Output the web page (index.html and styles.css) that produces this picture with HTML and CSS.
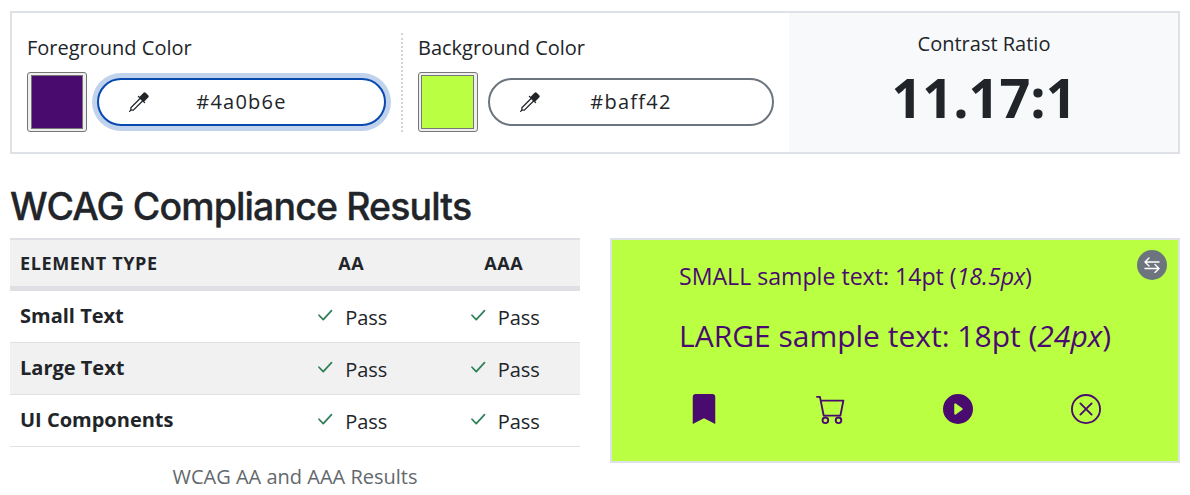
FILE: index.html
```html
<!DOCTYPE html>
<html lang="en">
<head>
<meta charset="utf-8">
<title>Contrast Checker</title>
<link rel="stylesheet" href="styles.css">
</head>
<body>
<svg class="defs" width="0" height="0" aria-hidden="true">
  <symbol id="eyedropper" viewBox="0 0 16 16"><path d="M13.354.646a1.207 1.207 0 0 0-1.708 0L8.5 3.793l-.646-.647a.5.5 0 1 0-.708.708L8.293 5l-7.147 7.146A.5.5 0 0 0 1 12.5v1.793l-.854.853a.5.5 0 1 0 .708.707L1.707 15H3.5a.5.5 0 0 0 .354-.146L11 7.707l1.146 1.147a.5.5 0 0 0 .708-.708l-.647-.646 3.147-3.146a1.207 1.207 0 0 0 0-1.708zM2 12.707l7-7L10.293 7l-7 7H2z"/></symbol>
  <symbol id="check" viewBox="0 0 16 16"><path d="M3.2 8.2 6.6 11.7 13.2 4.5" fill="none" stroke="currentColor" stroke-width="1.4" stroke-linecap="round" stroke-linejoin="round"/></symbol>
</svg>
<main class="page">
  <section class="picker">
    <div class="color">
      <div class="label">Foreground Color</div>
      <div class="controls">
        <div class="swatch"><div class="chip chip-fg"></div></div>
        <div class="field field-focus"><svg class="dropper"><use href="#eyedropper"/></svg><span>#4a0b6e</span></div>
      </div>
    </div>
    <div class="color color-bg">
      <div class="label">Background Color</div>
      <div class="controls">
        <div class="swatch swatch-bg"><div class="chip chip-bg"></div></div>
        <div class="field"><svg class="dropper"><use href="#eyedropper"/></svg><span>#baff42</span></div>
      </div>
    </div>
    <div class="ratio">
      <div class="ratio-label">Contrast Ratio</div>
      <div class="ratio-value">11.17:1</div>
    </div>
  </section>
  <h2 class="title">WCAG Compliance Results</h2>
  <section class="results">
    <table class="table">
      <caption>WCAG AA and AAA Results</caption>
      <thead><tr><th class="name">Element Type</th><th>AA</th><th>AAA</th></tr></thead>
      <tbody>
        <tr><th class="name">Small Text</th><td><svg class="check"><use href="#check"/></svg><span>Pass</span></td><td><svg class="check"><use href="#check"/></svg><span>Pass</span></td></tr>
        <tr class="striped"><th class="name">Large Text</th><td><svg class="check"><use href="#check"/></svg><span>Pass</span></td><td><svg class="check"><use href="#check"/></svg><span>Pass</span></td></tr>
        <tr><th class="name">UI Components</th><td><svg class="check"><use href="#check"/></svg><span>Pass</span></td><td><svg class="check"><use href="#check"/></svg><span>Pass</span></td></tr>
      </tbody>
    </table>
    <div class="sample">
      <div class="swap"><svg viewBox="0 0 16 16"><path d="M15 5H1.2M5 1 1 5l4 4M1 11.5h13.8M11 7.5l4 4-4 4" fill="none" stroke="currentColor" stroke-width="1.4" stroke-linecap="round" stroke-linejoin="round"/></svg></div>
      <div class="small"><span>SMALL sample text: 14pt (<em>18.5px</em>)</span></div>
      <div class="large"><span>LARGE sample text: 18pt (<em>24px</em>)</span></div>
      <div class="icons">
        <svg viewBox="0 0 16 16"><path d="M2 1.6Q2 0 3.6 0h8.8Q14 0 14 1.6V16l-6-3.1L2 16z"/></svg>
        <svg viewBox="0 0 16 16"><path d="M.5 1.5H2.1L4.1 11.5H13L14.6 3.5H2.6" fill="none" stroke="currentColor" stroke-linecap="round" stroke-linejoin="round"/><circle cx="5" cy="14" r="1.5" fill="none" stroke="currentColor"/><circle cx="12" cy="14" r="1.5" fill="none" stroke="currentColor"/></svg>
        <svg viewBox="0 0 16 16"><path d="M16 8A8 8 0 1 1 0 8a8 8 0 0 1 16 0M6.79 5.093A.5.5 0 0 0 6 5.5v5a.5.5 0 0 0 .79.407l3.5-2.5a.5.5 0 0 0 0-.814z"/></svg>
        <svg viewBox="0 0 16 16"><path d="M15.5 8a7.5 7.5 0 1 1-15 0 7.5 7.5 0 0 1 15 0zM5 5l6 6M11 5l-6 6" fill="none" stroke="currentColor" stroke-linecap="round"/></svg>
      </div>
    </div>
  </section>
</main>
</body>
</html>
```
FILE: styles.css
```css
* { box-sizing: border-box; }
body { margin: 0; background: #fff; color: #212529; font: 400 20px/30px "Open Sans", sans-serif; overflow: hidden; }
.defs { display: block; }
svg { fill: currentColor; flex: none; }
.page { padding: 11px 10px 0; }
.picker { display: flex; height: 143px; border: 2px solid #dee2e6; }
.color { width: 389px; padding: 0 0 0 15px; margin: 20px 0; height: 99px; }
.color-bg { width: 388px; border-left: 2px dotted #ced4da; padding-left: 15px; }
.label { height: 39px; }
.controls { display: flex; align-items: center; gap: 10px; }
.swatch { width: 60px; height: 60px; padding: 2px 3px; border: 1px solid #767676; border-radius: 3px; background: #efefef; }
.swatch-bg { padding-left: 2px; }
.chip { height: 100%; border: 1px solid #777; }
.chip-fg { background: #4a0b6e; }
.chip-bg { background: #baff42; }
.field { display: flex; align-items: center; width: 286px; height: 48px; padding-left: 30px; border: 2px solid #6c757d; border-radius: 24px; background: #fff; letter-spacing: 1.25px; }
.field span { flex: 1; text-align: center; padding-right: 50px; }
.field-focus { width: 289px; border-color: #0849b0; box-shadow: 0 0 0 5px #c1d2ec; }
.dropper { width: 20px; height: 20px; }
.ratio { flex: 1; background: #f8f9fa; text-align: center; padding: 16px 0 0 1px; }
.ratio-label { line-height: 30px; }
.ratio-value { font-size: 54px; font-weight: 700; line-height: 76px; }
.title { margin: 28px 0 0; height: 56px; font: 500 37.5px/50px Inter, sans-serif; letter-spacing: -.88px; -webkit-text-stroke: .35px; white-space: nowrap; }
.results { display: flex; justify-content: space-between; align-items: flex-start; }
.table { width: 570px; border-collapse: separate; border-spacing: 0; table-layout: fixed; }
.table caption { caption-side: bottom; padding-top: 15px; color: #63686d; }
.table th, .table td { height: 52px; border-bottom: 1px solid #dee2e6; text-align: center; }
.table th { padding: 0 10px 2px; font-weight: 700; }
.table .name { width: 265px; text-align: left; }
.table thead th { height: 53px; padding-bottom: 1px; background: #f1f1f1; border-top: 2px solid #dee0e6; border-bottom: 5px solid #dee0e6; font-size: 18px; text-transform: uppercase; letter-spacing: .63px; }
.striped { background: #f1f1f1; }
.table td { padding: 2px 0 0; }
.check { width: 20px; height: 20px; color: #2f7f59; margin-right: 10px; vertical-align: 0; }
.sample { position: relative; width: 570px; height: 225px; padding: 19px 28px 0; border: 2px solid #dee2e6; background: #baff42; color: #4a0b6e; }
.small, .large { padding-left: 39px; white-space: nowrap; }
.small { font-size: 23.125px; line-height: 35px; }
.large { font-size: 30px; line-height: 45px; margin-top: 19px; }
.icons { display: grid; grid-template-columns: repeat(4, 127.4px); justify-items: center; margin-top: 36px; }
.icons svg { width: 30px; height: 30px; }
.swap { position: absolute; right: 11px; top: 10px; display: grid; place-items: center; width: 30px; height: 30px; border-radius: 50%; background: #6c757d; color: #fff; }
.swap svg { width: 16px; height: 16px; }
```
